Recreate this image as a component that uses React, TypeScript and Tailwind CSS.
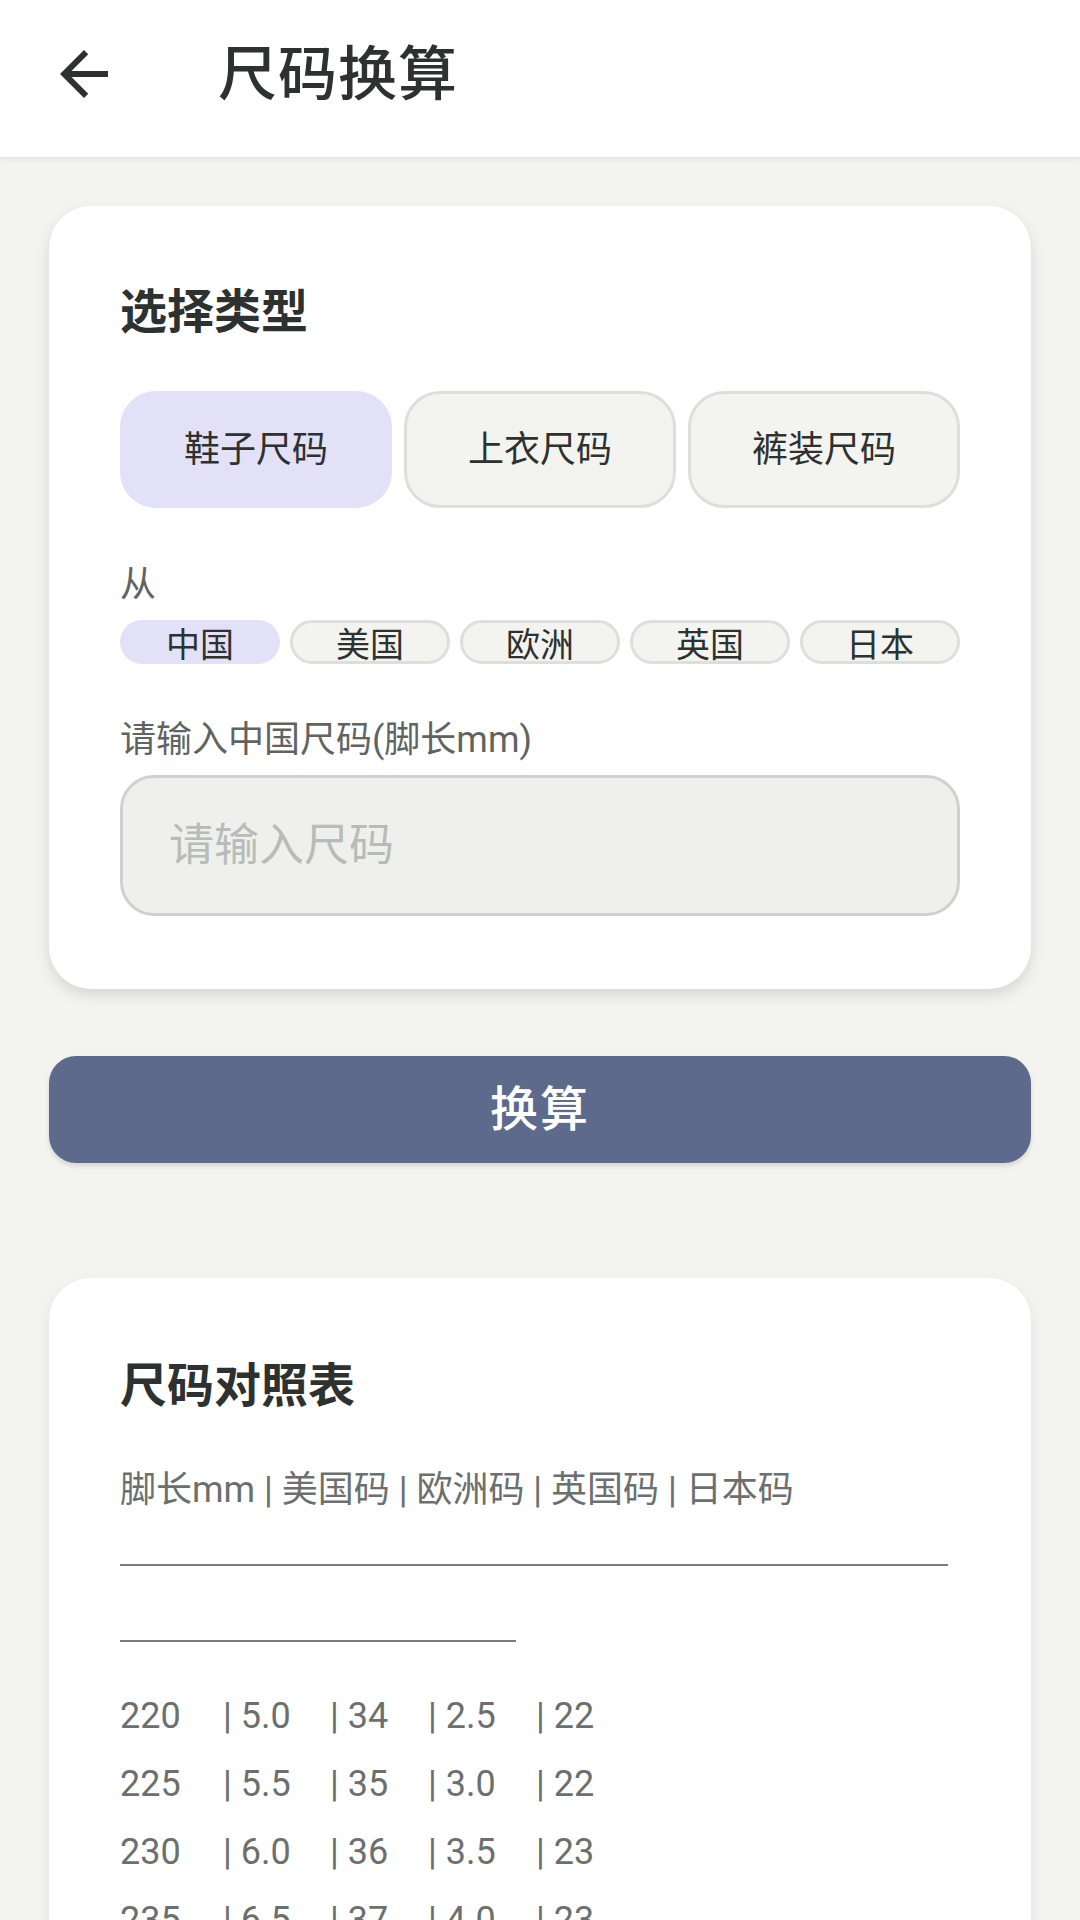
import { useState } from "react";

const types = ["鞋子尺码", "上衣尺码", "裤装尺码"];
const regions = ["中国", "美国", "欧洲", "英国", "日本"];

const rows = [
    ["220", "5.0", "34", "2.5", "22"],
    ["225", "5.5", "35", "3.0", "22"],
    ["230", "6.0", "36", "3.5", "23"],
    ["235", "6.5", "37", "4.0", "23"],
    ["240", "7.0", "38", "4.5", "24"],
    ["245", "7.5", "39", "5.0", "24"],
];

const colWidths = ["w-[103px]", "w-[107px]", "w-[98px]", "w-[108px]", "w-[100px]"];

function BackArrow() {
    return (
        <svg viewBox="0 0 24 24" className="w-[72px] h-[72px]" fill="#2d312f">
            <path d="M20 11H7.83l5.59-5.59L12 4l-8 8 8 8 1.41-1.41L7.83 13H20v-2z" />
        </svg>
    );
}

export default function App() {
    const [type, setType] = useState(0);
    const [region, setRegion] = useState(0);
    const [value, setValue] = useState("");

    return (
        <div
            className="min-h-[1920px] bg-[#f3f4ef] text-[#2d312f]"
            style={{ fontFamily: '"Roboto", "Noto Sans CJK SC", "Noto Sans", sans-serif' }}
        >
            {/* top bar */}
            <header className="h-[157px] bg-white flex items-center shadow-[0_2px_6px_rgba(0,0,0,0.08)] relative z-10">
                <button className="ml-[48px] mt-[-10px] flex items-center justify-center">
                    <BackArrow />
                </button>
                <h1 className="ml-[98px] mt-[-8px] text-[59px] font-medium leading-none tracking-[1px]">尺码换算</h1>
            </header>

            <main className="px-[49px] pt-[49px] pb-[40px]">
                {/* converter card */}
                <section className="bg-white rounded-[42px] px-[71px] pt-[73px] pb-[73px] shadow-[0_6px_14px_rgba(0,0,0,0.12)]">
                    <h2 className="h-[66px] leading-[66px] text-[47px] font-bold">选择类型</h2>

                    <div className="mt-[46px] flex gap-[12px]">
                        {types.map((t, i) => (
                            <button
                                key={t}
                                onClick={() => setType(i)}
                                className={
                                    i === type
                                        ? "flex-1 h-[117px] rounded-[36px] bg-[#e3e1f8] border-[3px] border-transparent text-[36px] text-[#2d312f]"
                                        : "flex-1 h-[117px] rounded-[36px] bg-[#f3f4ef] border-[3px] border-[#dededb] text-[36px] text-[#2d312f]"
                                }
                            >
                                {t}
                            </button>
                        ))}
                    </div>

                    <div className="mt-[52px] h-[50px] leading-[50px] text-[36px] text-[#5f6462]">从</div>

                    <div className="mt-[10px] flex gap-[10px]">
                        {regions.map((r, i) => (
                            <button
                                key={r}
                                onClick={() => setRegion(i)}
                                className={
                                    i === region
                                        ? "flex-1 h-[44px] rounded-full bg-[#e3e1f8] border-[3px] border-transparent overflow-hidden flex justify-center pt-[2px] text-[34px] leading-[40px] text-[#2d312f]"
                                        : "flex-1 h-[44px] rounded-full bg-[#f3f4ef] border-[3px] border-[#dededb] overflow-hidden flex justify-center pt-[2px] text-[34px] leading-[40px] text-[#2d312f]"
                                }
                            >
                                {r}
                            </button>
                        ))}
                    </div>

                    <div className="mt-[51px] h-[50px] leading-[50px] text-[36px] text-[#5f6462]">
                        请输入{regions[region]}尺码(脚长mm)
                    </div>

                    <input
                        value={value}
                        onChange={(e) => setValue(e.target.value)}
                        placeholder="请输入尺码"
                        className="mt-[10px] w-full h-[141px] rounded-[34px] bg-[#eff0ec] border-[3px] border-[#d0d1ce] px-[46px] text-[45px] text-[#2d312f] placeholder:text-[#b7bcba] outline-none"
                    />
                </section>

                <button className="mt-[67px] w-full h-[107px] rounded-[27px] bg-[#5d6a8c] text-white text-[48px] font-medium tracking-[2px] shadow-[0_3px_5px_rgba(0,0,0,0.12)]">
                    换算
                </button>

                {/* size chart card */}
                <section className="mt-[115px] bg-white rounded-[42px] px-[71px] pt-[75px] pb-[60px] shadow-[0_6px_14px_rgba(0,0,0,0.08)]">
                    <h2 className="h-[66px] leading-[66px] text-[47px] font-bold">尺码对照表</h2>
                    <div className="mt-[46px] h-[50px] leading-[50px] text-[36px] text-[#6b706e]">
                        脚长mm | 美国码 | 欧洲码 | 英国码 | 日本码
                    </div>
                    <div className="mt-[49px] w-[828px] h-[2px] bg-[#7a7d7c]" />
                    <div className="mt-[74px] w-[396px] h-[2px] bg-[#7a7d7c]" />
                    <div className="mt-[40px] flex flex-col">
                        {rows.map((row) => (
                            <div key={row[0]} className="flex h-[68px] items-center text-[36px] text-[#6b706e]">
                                {row.map((cell, ci) => (
                                    <span key={ci} className={`${colWidths[ci]} shrink-0 whitespace-pre`}>
                                        {ci === 0 ? cell : `| ${cell}`}
                                    </span>
                                ))}
                            </div>
                        ))}
                    </div>
                </section>
            </main>
        </div>
    );
}
